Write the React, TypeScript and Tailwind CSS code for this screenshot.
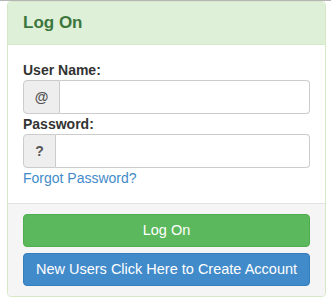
export default function App() {
  return (
    <div className="min-h-[303px] bg-white border-t border-[#b5b5b5] font-['Liberation_Sans',Arial,sans-serif] text-[14px] text-[#333]">
      <div className="ml-[7px] w-[319px] border border-[#d6e9c6] rounded-[4px]">
        <div className="h-[43px] bg-[#dff0d8] border-b border-[#d6e9c6] rounded-t-[3px] px-[15px] flex items-center">
          <h3 className="text-[17px] font-bold text-[#3c763d] leading-[22px]">Log On</h3>
        </div>
        <div className="px-[15px] pt-[15px] pb-[15px]">
          <label className="block font-bold leading-[20px]">User Name:</label>
          <div className="flex h-[34px]">
            <span className="flex items-center justify-center w-[37px] bg-[#eeeeee] border border-[#ccc] rounded-l-[4px] text-[#555] font-bold">
              @
            </span>
            <input
              type="text"
              className="flex-1 min-w-0 border border-l-0 border-[#ccc] rounded-r-[4px] px-[12px] outline-none"
            />
          </div>
          <label className="block font-bold leading-[20px]">Password:</label>
          <div className="flex h-[34px]">
            <span className="flex items-center justify-center w-[33px] bg-[#eeeeee] border border-[#ccc] rounded-l-[4px] text-[#555] font-bold">
              ?
            </span>
            <input
              type="password"
              className="flex-1 min-w-0 border border-l-0 border-[#ccc] rounded-r-[4px] px-[12px] outline-none"
            />
          </div>
          <a href="#" className="block leading-[20px] text-[#428bca]">
            Forgot Password?
          </a>
        </div>
        <div className="bg-[#f5f5f5] border-t border-[#e3e3e3] rounded-b-[3px] px-[15px] py-[10px] flex flex-col gap-[6px]">
          <button className="h-[33px] w-full rounded-[4px] bg-[#5cb85c] border border-[#4cae4c] text-white text-[14.5px]">
            Log On
          </button>
          <button className="h-[33px] w-full rounded-[4px] bg-[#428bca] border border-[#357ebd] text-white text-[14.5px]">
            New Users Click Here to Create Account
          </button>
        </div>
      </div>
    </div>
  );
}
